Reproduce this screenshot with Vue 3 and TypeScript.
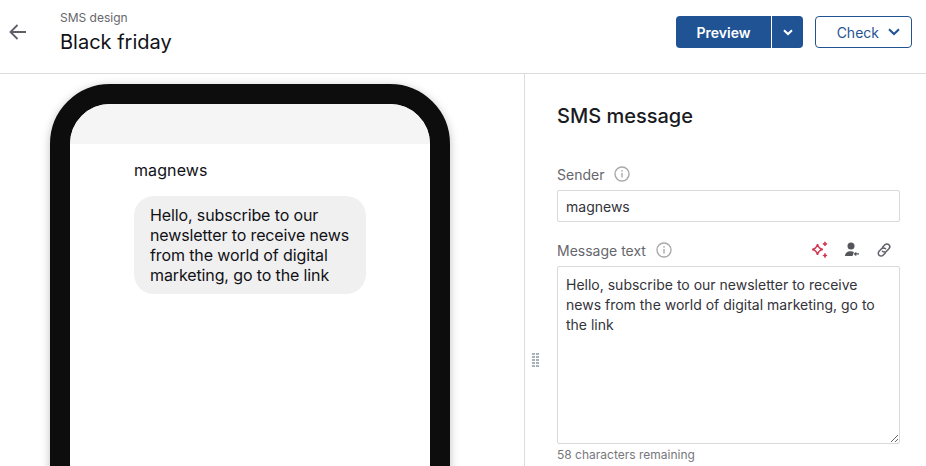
<template>
  <div class="page">
    <header class="topbar">
      <button class="back" type="button" aria-label="Back">
        <svg width="18" height="16" viewBox="0 0 18 16" fill="none" stroke="#5f6068" stroke-width="1.8">
          <path d="M17 8H1.500M8.500 1 1.500 8l7 7" />
        </svg>
      </button>
      <div class="titles">
        <div class="kicker">SMS design</div>
        <h1 class="title">Black friday</h1>
      </div>
      <div class="actions">
        <div class="split">
          <button class="split-main" type="button">Preview</button>
          <button class="split-caret" type="button" aria-label="More">
            <svg width="10" height="7" viewBox="0 0 10 7" fill="none" stroke="#fff" stroke-width="2">
              <path d="M1 1.200 5 5l4-3.800" />
            </svg>
          </button>
        </div>
        <button class="check" type="button">
          Check
          <svg width="12" height="8" viewBox="0 0 12 8" fill="none" stroke="#1f5394" stroke-width="2">
            <path d="M1 1.200 6 6l5-4.800" />
          </svg>
        </button>
      </div>
    </header>

    <main class="body">
      <section class="preview">
        <div class="phone">
          <div class="phone-top"></div>
          <div class="phone-content">
            <div class="sender-name">{{ sender }}</div>
            <div class="bubble">{{ message }}</div>
          </div>
        </div>
      </section>

      <div class="grip" aria-hidden="true">
        <span v-for="n in 10" :key="n"></span>
      </div>

      <aside class="panel">
        <h2 class="panel-title">SMS message</h2>

        <div class="label-row sender-label">
          <label class="label">Sender</label>
          <svg class="info" width="16" height="16" viewBox="0 0 16 16" fill="none" stroke="#a9a9a9" stroke-width="1.400">
            <circle cx="8" cy="8" r="7" />
            <path d="M8 7v4.400M8 4.200v1.500" />
          </svg>
        </div>
        <input class="field" type="text" :value="sender" />

        <div class="label-row message-label">
          <label class="label">Message text</label>
          <svg class="info" width="16" height="16" viewBox="0 0 16 16" fill="none" stroke="#a9a9a9" stroke-width="1.400">
            <circle cx="8" cy="8" r="7" />
            <path d="M8 7v4.400M8 4.200v1.500" />
          </svg>
          <div class="tools">
            <svg width="18" height="18" viewBox="0 0 18 18" fill="none" stroke="#d2344f" stroke-width="1.500">
              <path d="M6.500 3.200C7.200 6.700 8.300 7.800 11.800 8.500 8.300 9.200 7.200 10.300 6.500 13.800 5.800 10.300 4.700 9.200 1.200 8.500 4.700 7.800 5.800 6.700 6.500 3.200Z" />
              <path d="M14 .800c.2 1.300.8 1.900 2.100 2.100-1.300.2-1.900.8-2.100 2.100-.2-1.300-.8-1.900-2.100-2.100 1.300-.2 1.900-.8 2.100-2.100ZM14 12.400c.2 1.300.8 1.900 2.100 2.100-1.300.2-1.900.8-2.100 2.100-.2-1.300-.8-1.900-2.100-2.100 1.300-.2 1.900-.8 2.100-2.100Z" fill="#d2344f" stroke-width="1" />
            </svg>
            <svg width="18" height="18" viewBox="0 0 18 18" fill="#55565c">
              <circle cx="8" cy="5" r="3.500" />
              <path d="M2 15c0-3 2.500-4.800 5.500-4.800 1.300 0 2.500.3 3.400.8L9.500 15Z" />
              <path d="M11.500 12.300H16v1.300h-4.500zM13.300 10.700v4.600l-2.800-2.300Z" />
            </svg>
            <svg width="18" height="18" viewBox="0 0 18 18" fill="none" stroke="#5f6068" stroke-width="1.500" stroke-linecap="round">
              <path d="M7.500 6.200 9.900 3.800a2.800 2.800 0 0 1 4 4l-2.400 2.400a2.800 2.800 0 0 1-4 0" />
              <path d="M10.500 11.800 8.100 14.200a2.800 2.800 0 0 1-4-4l2.400-2.400a2.800 2.800 0 0 1 4 0" />
            </svg>
          </div>
        </div>
        <textarea class="field area" :value="message"></textarea>
        <div class="remaining">58 characters remaining</div>
      </aside>
    </main>
  </div>
</template>

<script setup lang="ts">
const sender = 'magnews'
const message =
  'Hello, subscribe to our newsletter to receive news from the world of digital marketing, go to the link'
</script>

<style>
html,
body {
  margin: 0;
  height: 100%;
  overflow: hidden;
  background: #fff;
}
</style>

<style scoped>
.page {
  width: 926px;
  height: 466px;
  overflow: hidden;
  font-family: Inter, "Liberation Sans", sans-serif;
  color: #1a1a1f;
  display: flex;
  flex-direction: column;
}

.topbar {
  flex: none;
  height: 64px;
  padding-bottom: 9px;
  border-bottom: 1px solid #dcdcdc;
  display: flex;
  align-items: center;
}

.back {
  width: 18px;
  height: 16px;
  margin: 0 0 0 9px;
  padding: 0;
  border: 0;
  background: none;
  display: flex;
}

.titles {
  margin-left: 33px;
}

.kicker {
  font-size: 12px;
  line-height: 14px;
  color: #66666c;
}

.title {
  margin: 5px 0 0;
  font-size: 20px;
  line-height: 24px;
  font-weight: 400;
  color: #111116;
}

.actions {
  margin-left: auto;
  margin-right: 14px;
  display: flex;
  gap: 12px;
}

.split {
  display: flex;
  width: 127px;
  height: 32px;
  border-radius: 4px;
  overflow: hidden;
  background: #1f5394;
}

.split-main,
.split-caret {
  border: 0;
  padding: 0;
  background: none;
  color: #fff;
  font-family: inherit;
  display: flex;
  align-items: center;
  justify-content: center;
}

.split-main {
  width: 96px;
  font-size: 14px;
  font-weight: 600;
  border-right: 1px solid #fff;
}

.split-caret {
  flex: 1;
}

.check {
  width: 97px;
  height: 32px;
  box-sizing: border-box;
  border: 1px solid #1f5394;
  border-radius: 4px;
  background: #fff;
  color: #1f5394;
  font-family: inherit;
  font-size: 14px;
  display: flex;
  align-items: center;
  justify-content: flex-end;
  gap: 9px;
  padding: 0 11px 0 0;
}

.body {
  position: relative;
  flex: 1;
  min-height: 0;
  display: flex;
}

.preview {
  flex: none;
  width: 525px;
  box-sizing: border-box;
  border-right: 1px solid #dcdcdc;
  padding: 10px 0 0 50px;
  overflow: hidden;
}

.phone {
  width: 400px;
  height: 520px;
  box-sizing: border-box;
  border: 20px solid #0d0d0d;
  border-radius: 60px;
  box-shadow: 0 2px 10px rgba(0, 0, 0, 0.25);
  overflow: hidden;
  background: #fff;
}

.phone-top {
  height: 40px;
  background: #f5f5f5;
}

.phone-content {
  padding: 16px 0 0 64px;
}

.sender-name {
  font-size: 16px;
  line-height: 20px;
  letter-spacing: 0.1px;
  color: #111116;
}

.bubble {
  margin-top: 16px;
  width: 232px;
  box-sizing: border-box;
  padding: 9px 16px;
  background: #f0f0f0;
  border-radius: 20px;
  font-size: 16px;
  line-height: 20px;
  letter-spacing: -0.12px;
  color: #111116;
}

.grip {
  position: absolute;
  left: 532px;
  top: 279px;
  width: 7px;
  display: grid;
  grid-template-columns: 3px 3px;
  gap: 1px;
}

.grip span {
  height: 2px;
  background: #a9b0b8;
}

.panel {
  flex: 1;
  padding: 0 26px 0 32px;
}

.panel-title {
  margin: 30px 0 0;
  font-size: 20px;
  line-height: 24px;
  font-weight: 500;
}

.label-row {
  display: flex;
  align-items: center;
  gap: 10px;
  height: 20px;
}

.sender-label {
  margin-top: 36px;
}

.message-label {
  margin-top: 18px;
}

.label {
  font-size: 14px;
  color: #66666c;
}

.info {
  flex: none;
}

.tools {
  margin-left: auto;
  display: flex;
  gap: 14px;
  margin-right: 7px;
}

.field {
  display: block;
  width: 100%;
  box-sizing: border-box;
  height: 32px;
  margin-top: 6px;
  border: 1px solid #d9d9d9;
  border-radius: 2px;
  padding: 0 8px;
  font-family: inherit;
  font-size: 14px;
  color: #33333a;
  outline: none;
}

.area {
  height: 178px;
  padding: 8px;
  line-height: 20px;
  resize: vertical;
}

.remaining {
  margin-top: 3px;
  font-size: 12px;
  line-height: 16px;
  color: #77777d;
}
</style>
